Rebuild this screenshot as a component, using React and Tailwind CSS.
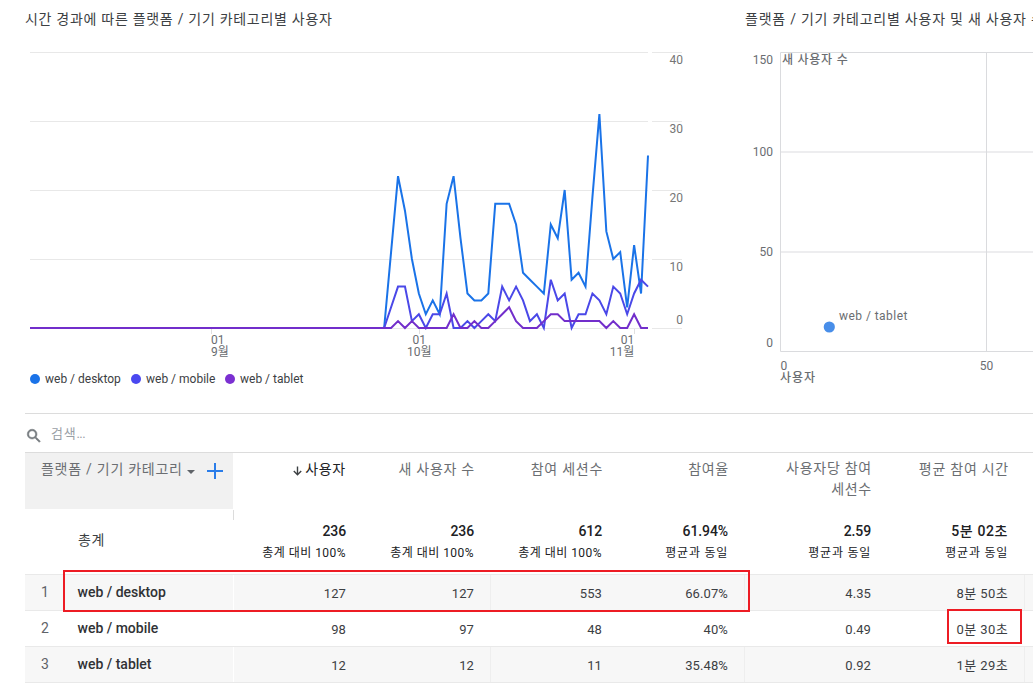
import React from "react";

const FONT = "font-['Roboto','Noto_Sans_CJK_KR',sans-serif]";

const X0 = 30;
const STEP = 618 / 89;
const FIRST = 51;

const desktop = [0, 11, 22, 17, 10, 5, 2, 4, 2, 18, 22, 13, 5, 4, 4, 5, 18, 18, 18, 15, 8, 7, 6, 5, 15, 13, 20, 7, 8, 6, 19, 31, 14, 10, 11, 3, 12, 5, 25];
const mobile = [0, 3, 6, 6, 1, 2, 0, 2, 2, 5, 0, 0, 1, 0, 1, 2, 1, 6, 4, 6, 4, 1, 2, 0, 7, 4, 5, 0, 2, 2, 5, 4, 2, 6, 5, 2, 5, 7, 6];
const tablet = [0, 0, 1, 0, 1, 0, 0, 0, 0, 0, 2, 0, 0, 1, 0, 0, 1, 2, 3, 1, 0, 0, 0, 1, 2, 2, 1, 1, 1, 1, 1, 1, 0, 1, 0, 0, 2, 0, 0];

const toPoints = (data) =>
  `${X0},328 ` +
  data.map((v, i) => `${(X0 + (FIRST + i) * STEP).toFixed(2)},${(328 - v * 6.9).toFixed(2)}`).join(" ");

function LineChart() {
  const rows = [
    [52, "40", 64],
    [121, "30", 133],
    [190, "20", 202],
    [259, "10", 271],
    [328, "0", 324],
  ];
  const ticks = [
    [211, "01", "9월", "start", 211],
    [419, "01", "10월", "middle", 419.3],
    [634, "01", "11월", "end", 634.3],
  ];
  return (
    <svg width="720" height="330" viewBox="0 36 720 330" className="block">
      {rows.map(([y, label, ty]) => (
        <g key={label}>
          <path d={`M30 ${y + 0.5}H648M652 ${y + 0.5}H682`} stroke="#e8e8e8" />
          <text x="683" y={ty} textAnchor="end" fontSize="12" fill="#757575">{label}</text>
        </g>
      ))}
      {ticks.map(([x, a, b, anchor, tx]) => (
        <g key={b} fontSize="12" fill="#6a6d71" textAnchor={anchor}>
          <path d={`M${x + 0.5} 329V334`} stroke="#e0e0e0" />
          <text x={tx} y="344">{a}</text>
          <text x={tx} y="356">{b}</text>
        </g>
      ))}
      <g fill="none" strokeWidth="2" strokeLinejoin="miter">
        <polyline points={toPoints(desktop)} stroke="#1a73e8" />
        <polyline points={toPoints(mobile)} stroke="#4a48e8" />
        <polyline points={toPoints(tablet)} stroke="#722ecb" />
      </g>
    </svg>
  );
}

function ScatterChart() {
  return (
    <svg width="313" height="360" viewBox="720 36 313 360" className="block">
      <path d="M780 152H1033M780 252H1033" stroke="#ededef" strokeWidth="2" />
      <path d="M1033 52.5H780.5V351.5H1033M986.5 52V351" fill="none" stroke="#dadbde" />
      <g fontSize="12" fill="#6a6d71">
        <text x="773" y="64" textAnchor="end">150</text>
        <text x="773" y="156" textAnchor="end">100</text>
        <text x="773" y="256" textAnchor="end">50</text>
        <text x="773" y="347" textAnchor="end">0</text>
        <text x="780.5" y="370">0</text>
        <text x="986.5" y="370" textAnchor="middle">50</text>
        <text x="839" y="320" letterSpacing="0.45">web / tablet</text>
        <text x="782" y="64" fontWeight="500" letterSpacing="0.75">새 사용자 수</text>
        <text x="780" y="382" fontWeight="500" letterSpacing="1">사용자</text>
      </g>
      <circle cx="829.3" cy="327" r="5.6" fill="#488ee9" />
    </svg>
  );
}

const legend = [
  ["web / desktop", "bg-[#1a73e8]", "w-[101px]"],
  ["web / mobile", "bg-[#4a48f0]", "w-[94px]"],
  ["web / tablet", "bg-[#7b30d1]", "w-[90px]"],
];

const COLS = "grid grid-cols-[53px_155px_129px_128px_128px_126px_143px_137px_9px]";

const totals = [
  ["236", "총계 대비 100%"],
  ["236", "총계 대비 100%"],
  ["612", "총계 대비 100%"],
  ["61.94%", "평균과 동일"],
  ["2.59", "평균과 동일"],
  ["5분 02초", "평균과 동일"],
];

const rows = [
  ["1", "web / desktop", "127", "127", "553", "66.07%", "4.35", "8분 50초"],
  ["2", "web / mobile", "98", "97", "48", "40%", "0.49", "0분 30초"],
  ["3", "web / tablet", "12", "12", "11", "35.48%", "0.92", "1분 29초"],
];

const headers = ["새 사용자 수", "참여 세션수", "참여율", "사용자당 참여\n세션수", "평균 참여 시간"];

const divider = (i, shaded) => {
  if (i === 0) return "shadow-[inset_1px_0_#ffffff]";
  return shaded && i % 2 === 0 ? "shadow-[inset_1px_0_#eeeeee]" : "";
};

export default function App() {
  return (
    <div className={`relative h-[687px] w-[1033px] overflow-hidden bg-white text-[#3c4043] ${FONT}`}>
      <div className="flex h-[413px]">
        <section className="w-[720px] shrink-0">
          <h2 className="h-9 whitespace-nowrap pl-[25px] pt-[9px] text-[14px] leading-5 tracking-[0.71px]">시간 경과에 따른 플랫폼 / 기기 카테고리별 사용자</h2>
          <LineChart />
          <div className="flex pl-[30px] pt-1">
            {legend.map(([name, dot, w]) => (
              <div key={name} className={`flex items-center ${w}`}>
                <span className={`size-[10px] shrink-0 rounded-full ${dot}`} />
                <span className="whitespace-nowrap pl-[5px] text-[12px] leading-[18px] text-[#3c4043]">{name}</span>
              </div>
            ))}
          </div>
        </section>
        <section className="w-[313px] overflow-hidden">
          <h2 className="h-9 whitespace-nowrap pl-[25px] pt-[9px] text-[14px] leading-5 tracking-[0.76px]">플랫폼 / 기기 카테고리별 사용자 및 새 사용자 수</h2>
          <ScatterChart />
        </section>
      </div>

      <section className="ml-[25px]">
        <div className="flex h-10 items-center border-y border-[#dcdcdc] text-[#9aa0a6]">
          <svg width="18" height="18" viewBox="0 0 24 24" fill="#757a7e" className="mt-[5px]">
            <path d="M15.5 14h-.79l-.28-.27A6.47 6.47 0 0 0 16 9.5 6.5 6.5 0 1 0 9.5 16c1.61 0 3.09-.59 4.23-1.57l.27.28v.79l5 4.99L20.49 19l-4.99-5zm-6 0C7.01 14 5 11.99 5 9.5S7.01 5 9.5 5 14 7.01 14 9.5 11.99 14 9.5 14z" stroke="#757a7e" strokeWidth=".7" />
          </svg>
          <span className="pl-[8px] pt-px text-[13px] leading-5 tracking-[0.8px]">검색<span className="tracking-[-0.6px]">...</span></span>
        </div>

        <div className={`${COLS} h-14 text-[14px] leading-5 tracking-[0.74px] text-[#6b6e72]`}>
          <div className="col-span-2 flex items-start bg-[#f1f1f1] pl-4 pt-[6px]">
            <span className="whitespace-nowrap">플랫폼 / 기기 카테고리</span>
            <svg width="8" height="4" viewBox="0 0 8 4" className="ml-1 mt-[11px]"><path d="M0 0H8L4 4Z" fill="#5f6368" /></svg>
            <svg width="16" height="16" viewBox="0 0 16 16" className="ml-3 mt-1"><path d="M8 0V16M0 8H16" stroke="#2b7de9" strokeWidth="2" /></svg>
          </div>
          <div className="flex items-start justify-end pr-4 pt-[6px] text-[#202124]">
            <svg width="9" height="10" viewBox="0 0 9 10" className="mr-[3px] mt-[7px]"><path d="M4.5 .5V8.5M.8 5L4.5 8.7L8.2 5" fill="none" stroke="#3c4043" strokeWidth="1.4" /></svg>
            <span>사용자</span>
          </div>
          {headers.map((h, i) => (
            <div key={h} className={`whitespace-pre pr-[15px] text-right ${i === 3 ? "pt-[5px] leading-[21px]" : "pt-[6px] leading-[21px]"}`}>{h}</div>
          ))}
        </div>

        <div className={`${COLS} h-[65px]`}>
          <div className="col-span-2 flex justify-between pl-[53px]">
            <span className="pt-[21px] text-[14px] leading-5 tracking-[0.7px]">총계</span>
            <span className="-mr-px mt-px h-[10px] w-px bg-[#dcdcdc]" />
          </div>
          {totals.map(([v, s], i) => (
            <div key={i} className="whitespace-nowrap pr-4 pt-3 text-right text-[#202124]">
              <div className={`text-[14px] leading-5 ${i === 5 ? "tracking-[0.6px]" : "-mr-px tracking-[-0.1px] pr-px"} font-medium`}>{v}</div>
              <div className={`pt-[2px] text-[12px] leading-5 ${i < 3 ? "tracking-[0.45px]" : "tracking-[0.75px]"}`}>{s}</div>
            </div>
          ))}
        </div>

        <div className="border-t border-[#e9e9e9]">
          {rows.map(([n, name, ...vals], r) => (
            <div key={n} className={`${COLS} h-9 border-b border-[#e9e9e9] ${r % 2 === 0 ? "bg-[#f7f7f7]" : "bg-white"}`}>
              <div className="pl-4 pt-[7px] text-[14px] leading-5 text-[#5f6368]">{n}</div>
              <div className="-ml-[.5px] whitespace-nowrap pt-[7px] text-[14px] font-medium leading-5 text-[#303235]">{name}</div>
              {vals.map((v, i) => (
                <div key={i} className={`whitespace-nowrap pr-4 pt-[9px] text-right text-[13px] leading-5 ${i === 5 ? "tracking-[0.4px]" : "tracking-[0.1px]"} ${divider(i, r % 2 === 0)}`}>{v}</div>
              ))}
              <div className={divider(6, r % 2 === 0)} />
            </div>
          ))}
        </div>
      </section>

      <div className="absolute left-[63px] top-[570px] h-[42px] w-[687px] border-2 border-[#ed1c24]" />
      <div className="absolute left-[947px] top-[609px] h-[35px] w-[75px] border-2 border-[#ed1c24]" />
    </div>
  );
}
